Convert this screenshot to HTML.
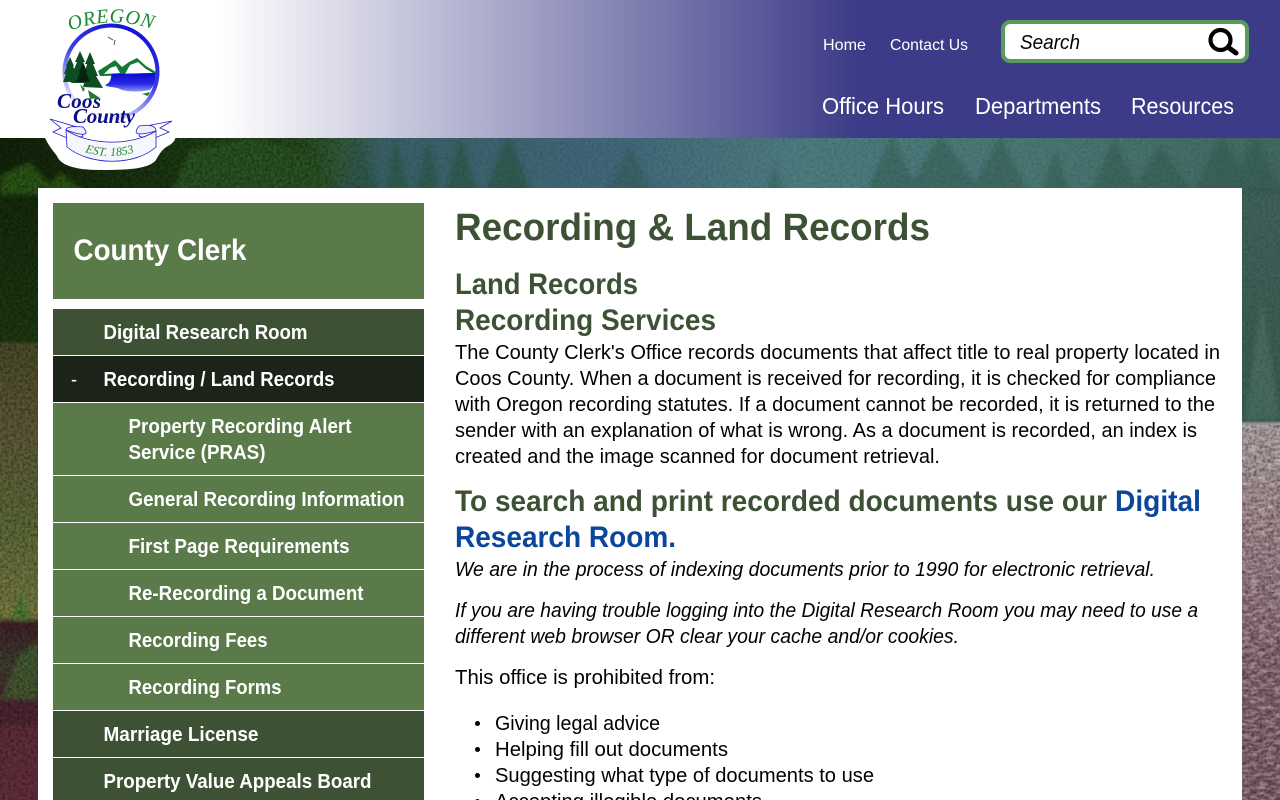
<!DOCTYPE html>
<html lang="en">
<head>
<meta charset="utf-8">
<title>Recording &amp; Land Records - Coos County</title>
<style>
html,body{margin:0;padding:0;width:1280px;height:800px;overflow:hidden;background:#fff}
#wrap{position:relative;width:1280px;height:800px;overflow:hidden;font-family:"Liberation Sans",sans-serif}
#wrap>*{position:absolute}
#bg{left:0;top:0}
#hdr{left:0;top:0;width:1280px;height:138px;background:linear-gradient(to right,#fff 17%,#3c3b87 67%)}
#main{left:38px;top:188px;width:1204px;height:612px;background:#fff}
.b{left:53px;width:371px}
.g{background:#5a7a49}.d{background:#3d5135}.k{background:#1c241a}
#search{left:1001px;top:20px;width:240px;height:35px;border:4px solid #5a9a5c;border-radius:9px;background:#fff}
#txt{left:0;top:0}
text{font-family:"Liberation Sans",sans-serif}
</style>
</head>
<body>
<div id="wrap">
<svg id="bg" width="1280" height="800" viewBox="0 0 1280 800">
<defs>
<linearGradient id="sky" x1="0" x2="1" y1="0" y2="0">
<stop offset="0" stop-color="#12240a"/><stop offset=".12" stop-color="#1b3611"/><stop offset=".23" stop-color="#25481c"/><stop offset=".265" stop-color="#335838"/><stop offset=".3" stop-color="#3a6068"/><stop offset=".48" stop-color="#41687a"/><stop offset=".62" stop-color="#4d7c80"/><stop offset=".8" stop-color="#4a7876"/><stop offset="1" stop-color="#436a62"/>
</linearGradient>
<linearGradient id="left" x1="0" x2="0" y1="188" y2="800" gradientUnits="userSpaceOnUse">
<stop offset="0" stop-color="#142a0c"/><stop offset=".25" stop-color="#1d3a12"/><stop offset=".255" stop-color="#4a4a2a"/><stop offset=".4" stop-color="#5e5a38"/><stop offset=".55" stop-color="#5c6a38"/><stop offset=".7" stop-color="#7a7c42"/><stop offset=".712" stop-color="#3f2228"/><stop offset=".78" stop-color="#3f3f30"/><stop offset=".84" stop-color="#4c2430"/><stop offset="1" stop-color="#5c2c38"/>
</linearGradient>
<linearGradient id="right" x1="0" x2="0" y1="188" y2="800" gradientUnits="userSpaceOnUse">
<stop offset="0" stop-color="#40635c"/><stop offset=".38" stop-color="#3a5a4f"/><stop offset=".385" stop-color="#a89c9c"/><stop offset=".55" stop-color="#9b8086"/><stop offset=".8" stop-color="#7f5c66"/><stop offset="1" stop-color="#77555f"/>
</linearGradient>
<linearGradient id="fade" x1="0" x2="1" y1="0" y2="0"><stop offset="0" stop-color="#fff"/><stop offset=".24" stop-color="#fff"/><stop offset=".3" stop-color="#555"/><stop offset="1" stop-color="#555"/></linearGradient>
<mask id="m" maskUnits="userSpaceOnUse" x="0" y="138" width="1280" height="50"><rect x="0" y="138" width="1280" height="50" fill="url(#fade)"/></mask>
<filter id="n" x="0" y="0" width="100%" height="100%">
<feTurbulence type="fractalNoise" baseFrequency=".35" numOctaves="2" seed="4"/>
<feColorMatrix values="0 0 0 0 0  0 0 0 0 0  0 0 0 0 0  1.6 0 0 0 -.55"/>
</filter>
<filter id="n2" x="0" y="0" width="100%" height="100%">
<feTurbulence type="fractalNoise" baseFrequency=".12 .3" numOctaves="2" seed="9"/>
<feColorMatrix values="0 0 0 0 1  0 0 0 0 1  0 0 0 0 1  1.6 0 0 0 -.65"/>
</filter>
<filter id="bl" x="-5%" y="-5%" width="110%" height="110%"><feGaussianBlur stdDeviation="2.5"/></filter>
</defs>
<rect x="0" y="130" width="1280" height="60" fill="url(#sky)"/>
<rect x="0" y="188" width="40" height="612" fill="url(#left)"/>
<rect x="1240" y="188" width="40" height="612" fill="url(#right)"/>
<g filter="url(#bl)">
<path d="M170 195 190 150 250 138 300 150 338 195Z" fill="#2a5220"/>
<path d="M40 195 60 172 90 195ZM0 175 30 162 60 195H0Z" fill="#2c5515"/>
<g fill="#2f5748">
<path d="M335 195 357 135 380 195ZM385 195 395 135 410 195ZM415 195 428 138 440 195ZM445 195 460 135 478 195ZM485 195 508 132 532 195Z" opacity=".75"/>
<path d="M605 195 630 145 655 195ZM765 195 775 165 785 195Z" opacity=".4"/>
<path d="M865 195 892 135 920 195ZM905 195 940 135 985 195ZM970 195 1000 135 1030 195ZM1040 195 1056 150 1070 195ZM1090 195 1114 138 1140 195ZM1130 195 1160 145 1195 195ZM1190 195 1222 135 1255 195ZM1225 195 1255 135 1285 195Z" opacity=".42"/>
</g>
<path d="M1244 420 1262 300 1280 420Z" fill="#52786c" opacity=".55"/>
<path d="M12 620 20 590 30 620Z" fill="#4f7a30"/>
<path d="M0 700 20 655 38 640V700Z" fill="#476a34" opacity=".7"/>
<path d="M0 725H38V800H0Z" fill="#6c3440" opacity=".6"/>
</g>
<rect x="0" y="138" width="1280" height="50" filter="url(#n)" opacity=".5" mask="url(#m)"/>
<rect x="0" y="188" width="38" height="612" filter="url(#n)" opacity=".5"/>
<rect x="1242" y="188" width="38" height="237" filter="url(#n)" opacity=".2"/>
<rect x="1242" y="425" width="38" height="375" filter="url(#n)" opacity=".55"/>
<rect x="1242" y="425" width="38" height="375" filter="url(#n2)" opacity=".55"/>
</svg>

<div id="hdr"></div>
<div id="main"></div>

<div class="b g" style="top:203px;height:96px"></div>
<div class="b d" style="top:309px;height:46px"></div>
<div class="b k" style="top:356px;height:46px"></div>
<div class="b g" style="top:403px;height:72px"></div>
<div class="b g" style="top:476px;height:46px"></div>
<div class="b g" style="top:523px;height:46px"></div>
<div class="b g" style="top:570px;height:46px"></div>
<div class="b g" style="top:617px;height:46px"></div>
<div class="b g" style="top:664px;height:46px"></div>
<div class="b d" style="top:711px;height:46px"></div>
<div class="b d" style="top:758px;height:42px"></div>

<div id="search"></div>

<svg id="txt" width="1280" height="800" viewBox="0 0 1280 800">
<defs>
<linearGradient id="ring" x1=".8" y1=".05" x2=".35" y2="1"><stop offset="0" stop-color="#1212d4"/><stop offset=".45" stop-color="#3a3ae8"/><stop offset=".8" stop-color="#b4b4f6"/><stop offset="1" stop-color="#fff"/></linearGradient>
<linearGradient id="lake" x1="0" x2="0" y1="0" y2="1"><stop offset="0" stop-color="#0808d0"/><stop offset=".6" stop-color="#2a2ae4"/><stop offset="1" stop-color="#8a9af2"/></linearGradient>
<path id="arc" d="M70 31Q110 15 152 29"/>
<path id="arc2" d="M85 152Q110 160 136 152"/>
</defs>

<!-- logo -->
<path d="M45 138C50 148 54 152 57 156 60 164 72 170 100 170 122 170 148 170 156 160 160 152 164 148 168 146 172 144 175 141 176 136L176 120 45 120Z" fill="#fff"/>
<circle cx="111" cy="72" r="46.500" fill="#fff" stroke="url(#ring)" stroke-width="4"/>
<text fill="#1a8a2a" font-style="italic" font-size="20" style="font-family:'Liberation Serif',serif"><textPath href="#arc" textLength="84" lengthAdjust="spacing">OREGON</textPath></text>
<path d="M108 37 113 40M115 40 114 45" stroke="#444" fill="none" stroke-width=".9"/>
<path d="M98 71 106 66 115 60 122 67 129 62 137 58 146 66 156 72 156 75 100 76Z" fill="#127a32"/>
<path d="M110 68 116 66 120 73 104 74ZM130 65 138 62 146 69 153 73 125 74Z" fill="#fff"/>
<path d="M112 74 155 73C156 80 154 86 150 90 140 92 130 92 122 90 115 86 108 88 105 85 112 82 110 78 112 74Z" fill="url(#lake)"/>
<g fill="#0c4e22">
<path d="M70 57 74 66 73 66 76 74 74 74 78 82H63L66 74 64 74 67 66 66 66Z"/>
<path d="M80 51 85 62 83 62 87 72 85 72 90 83H71L75 72 73 72 77 62 75 62Z"/>
<path d="M90 52 95 64 93 64 98 76 96 76 103 88 83 87 86 76 84 76 87 64 85 64Z"/>
</g>
<path d="M83 62 87 72 86 72 90 82H76L80 72 79 72Z" fill="#052410"/>
<path d="M80 84 85 89 83 92ZM88 90 100 98 90 99ZM142 94 150 92 148 96Z" fill="#2a7a2e"/>
<text x="57" y="108" textLength="44" lengthAdjust="spacing" font-size="21" font-weight="700" font-style="italic" fill="#0d0d85" style="font-family:'Liberation Serif',serif">Coos</text>
<text x="73" y="123" textLength="62" lengthAdjust="spacing" font-size="21" font-weight="700" font-style="italic" fill="#0d0d85" style="font-family:'Liberation Serif',serif">County</text>
<g fill="#fff" stroke="#1c1cc8" stroke-width=".8">
<path d="M50 119 80 128 83 136 72 140 53 132 61 128Z"/>
<path d="M172 121 141 127 139 136 150 140 169 132 160 128Z"/>
<path d="M66 130C85 137 90 135 83 127 72 126 66 127 66 130Z" fill="#eef"/>
<path d="M156 131C138 136 132 135 139 126 150 124 156 126 156 131Z" fill="#eef"/>
<path d="M66 130C90 146 132 146 156 131L156 147C135 166 90 166 67 147Z" fill="#f6f6fd"/>
</g>
<text font-size="12" font-style="italic" fill="#1f8a2e" style="font-family:'Liberation Serif',serif"><textPath href="#arc2" textLength="50" lengthAdjust="spacing">EST. 1853</textPath></text>

<!-- header nav -->
<g fill="#fff" font-size="16">
<text x="823" y="50" textLength="43" lengthAdjust="spacingAndGlyphs">Home</text>
<text x="890" y="50" textLength="78" lengthAdjust="spacingAndGlyphs">Contact Us</text>
</g>
<g fill="#fff" font-size="23">
<text x="822" y="114" textLength="122" lengthAdjust="spacingAndGlyphs">Office Hours</text>
<text x="975" y="114" textLength="126" lengthAdjust="spacingAndGlyphs">Departments</text>
<text x="1131" y="114" textLength="103" lengthAdjust="spacingAndGlyphs">Resources</text>
</g>
<text x="1020" y="49" font-size="20" font-style="italic" fill="#000" textLength="60" lengthAdjust="spacingAndGlyphs">Search</text>
<circle cx="1220.500" cy="40" r="10" fill="none" stroke="#000" stroke-width="4.200"/>
<path d="M1228.500 47.500 1236 53" stroke="#000" stroke-width="5" stroke-linecap="round" fill="none"/>

<!-- sidebar -->
<g fill="#fff" font-weight="700">
<text x="73.500" y="260" font-size="30" textLength="173" lengthAdjust="spacingAndGlyphs">County Clerk</text>
<g font-size="20">
<text x="103.500" y="339" textLength="204" lengthAdjust="spacingAndGlyphs">Digital Research Room</text>
<text x="71" y="386" font-weight="400" textLength="6" lengthAdjust="spacingAndGlyphs">-</text>
<text x="103.500" y="386" textLength="231" lengthAdjust="spacingAndGlyphs">Recording / Land Records</text>
<text x="128.500" y="433" textLength="223" lengthAdjust="spacingAndGlyphs">Property Recording Alert</text>
<text x="128.500" y="459" textLength="137" lengthAdjust="spacingAndGlyphs">Service (PRAS)</text>
<text x="128.500" y="506" textLength="276" lengthAdjust="spacingAndGlyphs">General Recording Information</text>
<text x="128.500" y="553" textLength="221" lengthAdjust="spacingAndGlyphs">First Page Requirements</text>
<text x="128.500" y="600" textLength="235" lengthAdjust="spacingAndGlyphs">Re-Recording a Document</text>
<text x="128.500" y="647" textLength="139" lengthAdjust="spacingAndGlyphs">Recording Fees</text>
<text x="128.500" y="694" textLength="153" lengthAdjust="spacingAndGlyphs">Recording Forms</text>
<text x="103.500" y="741" textLength="155" lengthAdjust="spacingAndGlyphs">Marriage License</text>
<text x="103.500" y="788" textLength="268" lengthAdjust="spacingAndGlyphs">Property Value Appeals Board</text>
</g>
</g>

<!-- content -->
<g fill="#3d5135" font-weight="700">
<text x="455" y="240" font-size="38" textLength="475" lengthAdjust="spacingAndGlyphs">Recording &amp; Land Records</text>
<g font-size="30">
<text x="455" y="294" textLength="183" lengthAdjust="spacingAndGlyphs">Land Records</text>
<text x="455" y="330" textLength="261" lengthAdjust="spacingAndGlyphs">Recording Services</text>
<text x="455" y="511" textLength="652" lengthAdjust="spacingAndGlyphs">To search and print recorded documents use our</text>
</g>
</g>
<g fill="#0b459c" font-weight="700" font-size="30">
<text x="1115" y="511" textLength="86" lengthAdjust="spacingAndGlyphs">Digital</text>
<text x="455" y="547" textLength="221" lengthAdjust="spacingAndGlyphs">Research Room.</text>
</g>
<g fill="#000" font-size="20">
<text x="455" y="359" textLength="765" lengthAdjust="spacingAndGlyphs">The County Clerk's Office records documents that affect title to real property located in</text>
<text x="455" y="385" textLength="761" lengthAdjust="spacingAndGlyphs">Coos County. When a document is received for recording, it is checked for compliance</text>
<text x="455" y="411" textLength="760" lengthAdjust="spacingAndGlyphs">with Oregon recording statutes. If a document cannot be recorded, it is returned to the</text>
<text x="455" y="437" textLength="742" lengthAdjust="spacingAndGlyphs">sender with an explanation of what is wrong. As a document is recorded, an index is</text>
<text x="455" y="463" textLength="485" lengthAdjust="spacingAndGlyphs">created and the image scanned for document retrieval.</text>
<g font-style="italic">
<text x="455" y="576" textLength="700" lengthAdjust="spacingAndGlyphs">We are in the process of indexing documents prior to 1990 for electronic retrieval.</text>
<text x="455" y="617" textLength="743" lengthAdjust="spacingAndGlyphs">If you are having trouble logging into the Digital Research Room you may need to use a</text>
<text x="455" y="643" textLength="504" lengthAdjust="spacingAndGlyphs">different web browser OR clear your cache and/or cookies.</text>
</g>
<text x="455" y="684" textLength="260" lengthAdjust="spacingAndGlyphs">This office is prohibited from:</text>
<text x="495" y="730" textLength="165" lengthAdjust="spacingAndGlyphs">Giving legal advice</text>
<text x="495" y="756" textLength="233" lengthAdjust="spacingAndGlyphs">Helping fill out documents</text>
<text x="495" y="782" textLength="379" lengthAdjust="spacingAndGlyphs">Suggesting what type of documents to use</text>
<text x="495" y="808" textLength="267" lengthAdjust="spacingAndGlyphs">Accepting illegible documents</text>
<circle cx="477.500" cy="723.500" r="2.500"/><circle cx="477.500" cy="749.500" r="2.500"/><circle cx="477.500" cy="775.500" r="2.500"/><circle cx="477.500" cy="801.500" r="2.500"/>
</g>
</svg>
</div>
</body>
</html>
